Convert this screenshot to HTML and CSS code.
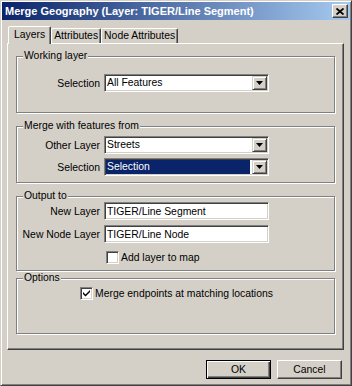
FILE: index.html
```html
<!DOCTYPE html>
<html lang="en">
  <head>
    <meta charset="UTF-8" />
    <title>Merge Geography</title>
    <link rel="stylesheet" href="styles.css">
  </head>
  <body>
    <div class="window">
      <div class="titlebar">
        <span class="title">Merge Geography (Layer: TIGER/Line Segment)</span>
        <span class="close">
          <svg width="8" height="7" viewBox="0 0 8 7"><path d="M0.5 0.5 L7.5 6.5 M7.5 0.5 L0.5 6.5" stroke="#000" stroke-width="1.8" fill="none"/></svg>
        </span>
      </div>

      <div class="tabs">
        <div class="tab active">Layers</div>
        <div class="tab">Attributes</div>
        <div class="tab">Node Attributes</div>
      </div>

      <div class="panel">
        <fieldset class="group group-working">
          <legend>Working layer</legend>
          <div class="row">
            <label>Selection</label>
            <div class="combo"><span class="value">All Features</span><span class="drop"><svg width="7" height="4" viewBox="0 0 7 4"><polygon points="0,0 7,0 3.5,4" fill="#000"/></svg></span></div>
          </div>
        </fieldset>

        <fieldset class="group group-merge">
          <legend>Merge with features from</legend>
          <div class="row">
            <label>Other Layer</label>
            <div class="combo"><span class="value">Streets</span><span class="drop"><svg width="7" height="4" viewBox="0 0 7 4"><polygon points="0,0 7,0 3.5,4" fill="#000"/></svg></span></div>
          </div>
          <div class="row">
            <label>Selection</label>
            <div class="combo"><span class="value selected">Selection</span><span class="drop"><svg width="7" height="4" viewBox="0 0 7 4"><polygon points="0,0 7,0 3.5,4" fill="#000"/></svg></span></div>
          </div>
        </fieldset>

        <fieldset class="group group-output">
          <legend>Output to</legend>
          <div class="row">
            <label>New Layer</label>
            <input class="field" type="text" value="TIGER/Line Segment" />
          </div>
          <div class="row">
            <label>New Node Layer</label>
            <input class="field" type="text" value="TIGER/Line Node" />
          </div>
          <div class="check-row check-add">
            <span class="check"></span>
            <span>Add layer to map</span>
          </div>
        </fieldset>

        <fieldset class="group group-options">
          <legend>Options</legend>
          <div class="check-row check-merge">
            <span class="check"><svg width="7" height="7" viewBox="0 0 7 7"><path d="M0 2 L2.5 4.5 L7 0 L7 2 L2.5 6.5 L0 4 Z" fill="#000"/></svg></span>
            <span>Merge endpoints at matching locations</span>
          </div>
        </fieldset>
      </div>

      <div class="actions">
        <button class="default">OK</button>
        <button>Cancel</button>
      </div>
    </div>
  </body>
</html>
```

FILE: styles.css
```css
* {
  box-sizing: border-box;
}
body {
  margin: 0;  font-family: "Liberation Sans", Arial, sans-serif;  font-size: 10.4px;  color: #000;  background: #d4d0c8;
}
.window {
  width: 352px;  height: 386px;  padding: 1px;  background: #d4d0c8;
  border: 1px solid;  border-color: #d4d0c8 #404040 #404040 #d4d0c8;
  box-shadow: inset 1px 1px 0 #fff, inset -1px -1px 0 #808080;
}
.titlebar {
  height: 18px;  display: flex;  align-items: center;  justify-content: space-between;  padding: 0 2px 0 3px;
  background: linear-gradient(to right, #0a246a, #a6caf0);  color: #fff;  font-weight: bold;  font-size: 11px;
}
.close {
  width: 16px;  height: 14px;  display: flex;  align-items: center;  justify-content: center;  background: #d4d0c8;
  border: 1px solid;  border-color: #fff #404040 #404040 #fff;  box-shadow: inset -1px -1px 0 #808080;
}

/* tabs */
.tabs {
  display: flex;  align-items: flex-end;  height: 17px;  margin: 6px 0 0 6px;
}
.tab {
  height: 15px;  padding: 0 2px;  line-height: 13px;
  border: 1px solid;  border-bottom: none;  border-color: #fff #404040 transparent #fff;
  border-radius: 2px 2px 0 0;  box-shadow: inset -1px 0 0 #808080;
}
.tab.active {
  height: 18px;  margin-bottom: -1px;  padding: 0 5px;  line-height: 15px;
  background: #d4d0c8;  position: relative;  z-index: 1;
}
.panel {
  width: 337px;  height: 307px;  margin-left: 5px;  padding: 6px 0 0 8px;
  border: 1px solid;  border-color: #fff #404040 #404040 #fff;  box-shadow: inset -1px -1px 0 #808080;
}

/* group boxes */
.group {
  width: 319px;  margin: 0;  padding: 0 3px;  min-width: 0;
  border: 1px solid #808080;  box-shadow: 1px 1px 0 #fff, inset 1px 1px 0 #fff;
}
.group legend {
  margin-left: 3px;  padding: 0 1px;  line-height: 12px;  background: #d4d0c8;
}
.group-working { height: 63px;  padding-top: 12px; }
.group-merge { height: 63px;  margin-top: 7px;  padding-top: 4px; }
.group-output { height: 81px;  margin-top: 7px;  padding-top: 0; }
.group-options { height: 62px;  margin-top: 1px;  padding-top: 3px; }
.row {
  display: flex;  align-items: center;  gap: 4px;
}
.row + .row {
  margin-top: 4px;
}
.group-output .row + .row {
  margin-top: 5px;
}
.row label {
  width: 80px;  text-align: right;
}

/* controls */
.combo, .field {
  width: 165px;  height: 18px;  background: #fff;
  border: 1px solid;  border-color: #808080 #fff #fff #808080;
  box-shadow: inset 1px 1px 0 #404040, inset -1px -1px 0 #d4d0c8;
}
.combo {
  display: flex;  padding: 1px;
}
.combo .value {
  flex: 1;  padding-left: 1px;  line-height: 14px;  margin-right: 2px;
}
.combo .value.selected {
  background: #0a246a;  color: #fff;
}
.combo .drop {
  width: 15px;  height: 14px;  display: flex;  align-items: center;  justify-content: center;  background: #d4d0c8;
  border: 1px solid;  border-color: #d4d0c8 #404040 #404040 #d4d0c8;
  box-shadow: inset 1px 1px 0 #fff, inset -1px -1px 0 #808080;
}
.field {
  padding: 0 2px;  font: inherit;  color: #000;  outline: none;
}
.check-row {
  display: flex;  align-items: center;  gap: 2px;  height: 13px;
}
.check-add { margin: 8px 0 0 86px; }
.check-merge { margin-left: 60px; }
.check {
  width: 13px;  height: 13px;  display: flex;  align-items: center;  justify-content: center;  background: #fff;
  border: 1px solid;  border-color: #808080 #fff #fff #808080;
  box-shadow: inset 1px 1px 0 #404040, inset -1px -1px 0 #d4d0c8;
}

/* buttons */
.actions {
  display: flex;  justify-content: flex-end;  gap: 6px;  margin-top: 10px;  padding-right: 8px;
}
.actions button {
  width: 65px;  height: 19px;  padding: 0;  font: inherit;  color: #000;  background: #d4d0c8;
  border: 1px solid;  border-color: #fff #404040 #404040 #fff;  box-shadow: inset -1px -1px 0 #808080;
}
.actions button.default {
  border-color: #000;  box-shadow: inset 1px 1px 0 #fff, inset -1px -1px 0 #404040, inset -2px -2px 0 #808080;
}
```
